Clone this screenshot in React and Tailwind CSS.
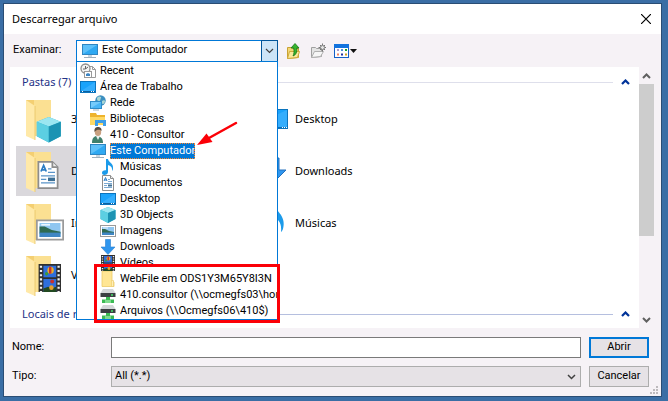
import React from "react";

const UI = "font-['Roboto','Liberation_Sans',sans-serif]";

/* ---------- icons ---------- */

function Svg({ size = 16, box = 16, className = "", children }) {
  return (
    <svg width={size} height={size} viewBox={`0 0 ${box} ${box}`} className={`shrink-0 ${className}`} aria-hidden="true">
      {children}
    </svg>
  );
}

function Monitor() {
  return (
    <>
      <rect x="0.5" y="1.5" width="15" height="10" fill="#2fa9f2" stroke="#2f86c2" />
      <path d="M1 11V2h14z" fill="#7fd0fb" opacity="0.6" />
      <path d="M6 12h4v2H6z" fill="#c9d5de" />
      <path d="M2 14h12v1H2z" fill="#9fb0bd" />
    </>
  );
}

function Recent() {
  return (
    <Svg>
      <path d="M8.5 3.5h4l3 3v8h-7z" fill="#fff" stroke="#9a9a9a" />
      <path d="M12.5 3.5v3h3" fill="none" stroke="#9a9a9a" />
      <circle cx="5.500" cy="5.500" r="4.500" fill="#f4f4f4" stroke="#8f8f8f" strokeWidth="1.300" />
      <path d="M5.500 3v3l2.500-2M3 6h2" fill="none" stroke="#666" />
      <rect x="4.500" y="8.500" width="7" height="6" fill="#fff" stroke="#9a9a9a" />
      <path d="M6 11l2-1 2 1v2H6z" fill="#3f86c4" />
    </Svg>
  );
}

function Desktop() {
  return (
    <Svg>
      <rect x="0.5" y="2.5" width="15" height="11" fill="#1aa3fb" stroke="#0b74bd" />
      <path d="M1 12L15 3v9z" fill="#4fbaff" opacity="0.5" />
      <path d="M1 12.500h14" stroke="#0a5f9e" />
      <path d="M2 12.500h1M11 12.500h1M13 12.500h1" stroke="#fff" />
    </Svg>
  );
}

function Network() {
  return (
    <Svg>
      <circle cx="10.500" cy="5.500" r="5.200" fill="#3c8fc0" />
      <path d="M7 3c2-3 5-1 4 0s0 3-2 3-2-1-2-3zM12 6c1-1 3-1 3 0s-1 3-2 3-2-2-1-3z" fill="#a9d6d4" />
      <rect x="0.500" y="6.500" width="11" height="7" fill="#4ab6f6" stroke="#2f8cc8" />
      <path d="M1 13V7h10z" fill="#93d8ff" opacity="0.600" />
      <path d="M3 15h6" stroke="#9fb0bd" />
    </Svg>
  );
}

function Libraries() {
  return (
    <Svg>
      <path d="M0 2h6l1 2h8v10H0z" fill="#eeb32c" />
      <path d="M0 6h15v8H0z" fill="#ffd964" />
      <path d="M5 14V9h11v6h-3v-3H8v3H5z" fill="#3f9fe8" />
    </Svg>
  );
}

function Person() {
  return (
    <Svg>
      <path d="M2 16c0-5 2-7 5-7s6 2 6 7z" fill="#3f7f6c" />
      <path d="M6 9h4l-2 4z" fill="#e8efec" />
      <ellipse cx="8" cy="5" rx="3.200" ry="4" fill="#c8a080" />
      <path d="M4.500 5C4 1 6 0 8 0s4 1 3.500 4C10 2.500 7 2 4.500 5z" fill="#5a4c3c" />
    </Svg>
  );
}

function Computer() {
  return <Svg><Monitor /></Svg>;
}

const NOTE = "M6 0h2c0 3 6 4 5 10-0.200 1-0.600 1.500-1 2 0.500-3.500-1-5-4-6v7c0 2-2 3-3.500 3S2 15 2 13.700 3.500 11 6 11.300z";

function Music() {
  return <Svg><path d={NOTE} fill="#1c9bea" /></Svg>;
}

function PageArt() {
  return (
    <>
      <path d="M2.500 0.500h8l3 3v12h-11z" fill="#fff" stroke="#8d8d8d" />
      <path d="M10.500 0.500v3h3" fill="#eee" stroke="#8d8d8d" />
      <path d="M4 6l1.500-3.500L7 6M4.600 5h2" fill="none" stroke="#2b7cc4" />
      <path d="M8 4.500h2M8 6.500h4M4 8.500h8M4 10.500h3M4 12.500h8" stroke="#5a94c8" strokeWidth="0.800" />
      <path d="M8 9.500h4v2H8z" fill="#3d6f94" />
    </>
  );
}

function Documents() {
  return <Svg><PageArt /></Svg>;
}

function CubeArt() {
  return (
    <>
      <path d="M8 0l7.500 3v9L8 16 0.500 12V3z" fill="#35b4ce" />
      <path d="M8 0l7.500 3L8 6 0.500 3z" fill="#9be6f1" />
      <path d="M0.500 3L8 6v10L0.500 12z" fill="#5ccfe2" />
      <path d="M8 6l7.500-3v9L8 16z" fill="#1c93b3" />
    </>
  );
}

function Cube() {
  return <Svg><CubeArt /></Svg>;
}

function PictureArt() {
  return (
    <>
      <rect x="0.500" y="2.500" width="15" height="11" fill="#fff" stroke="#9a9a9a" />
      <path d="M2 4h12v8H2z" fill="#8fc6f0" />
      <path d="M2 6l3 0 4 2 5 1v1H2z" fill="#2f6a52" />
      <path d="M2 9.500h12V12H2z" fill="#3f86c4" />
      <path d="M3 5h5" stroke="#e8f5ff" />
    </>
  );
}

function Pictures() {
  return <Svg><PictureArt /></Svg>;
}

function ArrowArt() {
  return <path d="M5.500 0.500h5V8H15l-7 7.500L1 8h4.500z" fill="#2f96ee" stroke="#2a7fd0" strokeWidth="0.600" />;
}

function Downloads() {
  return <Svg><ArrowArt /></Svg>;
}

function FilmArt() {
  return (
    <>
      <path d="M1 0h14v16H1z" fill="#2f2f2f" />
      <path d="M4 1h8v6.500H4zM4 8.500h8V16H4z" fill="#2f6fdc" />
      <path d="M2.500 1v15M13.500 1v15" stroke="#f2f2f2" strokeWidth="1.400" strokeDasharray="1.200 1.200" />
      <circle cx="8.500" cy="3.500" r="2" fill="#e8b02a" />
      <path d="M7.500 1.500h1.500v4H7.500z" fill="#c9302c" />
      <circle cx="6" cy="5.500" r="1" fill="#3a9a3c" />
      <circle cx="9.500" cy="10" r="1.200" fill="#c9302c" />
      <path d="M4 14l3-1 2 1 3-1v3H4z" fill="#234a22" />
      <circle cx="9" cy="13.500" r="1.400" fill="#e8a02a" />
    </>
  );
}

function Film() {
  return <Svg><FilmArt /></Svg>;
}

function Folder() {
  return (
    <Svg>
      <path d="M2 0h10v10l2 1v4.500H2z" fill="#ffe694" stroke="#ecca68" strokeWidth="0.800" />
      <path d="M11.500 9.500h2v6h-2z" fill="#ffefb8" stroke="#ecca68" strokeWidth="0.600" />
    </Svg>
  );
}

function NetDrive() {
  return (
    <Svg>
      <path d="M3 2h10l2.500 4H0.500z" fill="#d3d6d8" />
      <path d="M0.500 6h15v4h-15z" fill="#3b3f42" />
      <path d="M11 8h2" stroke="#46e06a" strokeWidth="1.500" />
      <path d="M6 10h4v2.500h4V16H2v-3.500h4z" fill="#3cba54" />
      <path d="M5 13h6v3H5z" fill="#7fdc8e" />
    </Svg>
  );
}

function FolderBack() {
  return (
    <>
      <path d="M4 5h25v36H4z" fill="#f4cf72" />
      <path d="M12 5h17v36H12z" fill="#fbe092" />
      <path d="M4 5l9 6v34l-9-4z" fill="#ffe9a8" />
      <path d="M13 11v34" stroke="#e9c465" strokeWidth="0.800" />
    </>
  );
}

function BigFolder({ children, place }) {
  return (
    <Svg size={48} box={48}>
      <FolderBack />
      <g transform={place}>{children}</g>
    </Svg>
  );
}

function BigDesktop() {
  return (
    <Svg size={48} box={48}>
      <rect x="1.500" y="14.500" width="40" height="19" fill="#1aa3fb" stroke="#0b74bd" />
      <path d="M2 33L41 15v18z" fill="#4fbaff" opacity="0.500" />
      <path d="M2 32.500h39" stroke="#0a6fb8" />
      <path d="M36 32.500h5" stroke="#fff" strokeDasharray="1 1" />
    </Svg>
  );
}

function BigDownloads() {
  return (
    <Svg size={48} box={48}>
      <path d="M24 11h9v12h7L28 35 17 23h7z" fill="#2f96ee" stroke="#2470bd" />
    </Svg>
  );
}

function BigMusic() {
  return (
    <Svg size={48} box={48}>
      <path d="M24 4h3c1 7 14 12 10 26-1 2-1 2-2 3 1-8-2-13-8-15v19c0 8-15 9-15 2 0-5 7-7 12-5z" fill="#1c9bea" />
    </Svg>
  );
}

function Chevron({ up = false, color = "#404040", thick = 1.5, className = "" }) {
  return (
    <svg width="9" height="6" viewBox="0 0 9 6" className={`shrink-0 ${className}`} aria-hidden="true">
      <path d={up ? "M1 5l3.500-3.500L8 5" : "M1 1l3.500 3.500L8 1"} fill="none" stroke={color} strokeWidth={thick} />
    </svg>
  );
}

function UpFolderIcon() {
  return (
    <Svg>
      <path d="M1.500 4.500h4l1 1h6v9l-11 1z" fill="#f3d774" stroke="#c9a234" />
      <path d="M3.500 8.500h10l-2 6-10 1z" fill="#fbe99a" stroke="#d0aa3c" />
      <path d="M9 0.500l4 4.500h-2.200c0.400 4-0.800 7-3.800 8 1.200-2 1.200-5 0.700-8H5z" fill="#37b52e" stroke="#17751a" strokeWidth="0.800" />
    </Svg>
  );
}

function NewFolderIcon() {
  return (
    <Svg>
      <path d="M1.500 4.500h4l1 1h5v8l-10 1z" fill="#e4e4e4" stroke="#a0a0a0" />
      <path d="M4.500 8.500h9l-3 5-9 1z" fill="#f6f6f6" stroke="#b0b0b0" />
      <circle cx="12.500" cy="4.500" r="2" fill="#e4e4e4" stroke="#777" />
      <path d="M12.500 0.500v1.500M12.500 7v1.500M8.500 4.500H10M15 4.500h1M10 2l1 1M15 2l-1 1M10 7l1-1M15 7l-1-1" stroke="#777" />
    </Svg>
  );
}

function ViewIcon() {
  return (
    <Svg>
      <rect x="0.500" y="1.500" width="14" height="13" fill="#fff" stroke="#1560c8" />
      <path d="M0 1h15v4H0z" fill="#1273de" />
      <path d="M3 6h2v2H3z" fill="#a79ad0" />
      <path d="M7 6h2v2H7z" fill="#4d8fe0" />
      <path d="M11 6h2v2h-2z" fill="#18a02c" />
      <path d="M3 10.500h2v2H3z" fill="#f08060" />
      <path d="M7 10.500h2v2H7z" fill="#2030a0" />
      <path d="M11 10.500h2v2h-2z" fill="#d0a020" />
    </Svg>
  );
}

/* ---------- data ---------- */

const LOCATIONS = [
  { name: "Recent", icon: Recent, pad: "pl-[3px]" },
  { name: "Área de Trabalho", icon: Desktop, pad: "pl-[3px]" },
  { name: "Rede", icon: Network, pad: "pl-[13px]" },
  { name: "Bibliotecas", icon: Libraries, pad: "pl-[13px]" },
  { name: "410 - Consultor", icon: Person, pad: "pl-[13px]" },
  { name: "Este Computador", icon: Computer, pad: "pl-[13px]", current: true },
  { name: "Músicas", icon: Music, pad: "pl-[23px]" },
  { name: "Documentos", icon: Documents, pad: "pl-[23px]" },
  { name: "Desktop", icon: Desktop, pad: "pl-[23px]" },
  { name: "3D Objects", icon: Cube, pad: "pl-[23px]" },
  { name: "Imagens", icon: Pictures, pad: "pl-[23px]" },
  { name: "Downloads", icon: Downloads, pad: "pl-[23px]" },
  { name: "Vídeos", icon: Film, pad: "pl-[23px]" },
  { name: "WebFile em ODS1Y3M65Y8I3N", icon: Folder, pad: "pl-[23px]" },
  { name: "410.consultor (\\\\ocmegfs03\\hom", icon: NetDrive, pad: "pl-[23px]" },
  { name: "Arquivos (\\\\Ocmegfs06\\410$)", icon: NetDrive, pad: "pl-[23px]" },
];

const FOLDERS = [
  { name: "3D Objects", icon: <BigFolder place="translate(14 22) scale(1.600)"><CubeArt /></BigFolder> },
  { name: "Desktop", icon: <BigDesktop /> },
  { name: "Documentos", icon: <BigFolder place="translate(12 14) scale(1.750)"><PageArt /></BigFolder>, selected: true },
  { name: "Downloads", icon: <BigDownloads /> },
  { name: "Imagens", icon: <BigFolder place="translate(14 17) scale(1.750)"><PictureArt /></BigFolder> },
  { name: "Músicas", icon: <BigMusic /> },
  { name: "Vídeos", icon: <BigFolder place="translate(15 13) scale(1.600 1.750)"><FilmArt /></BigFolder> },
];

/* ---------- parts ---------- */

function LocationList() {
  return (
    <ul role="listbox" aria-label="Locais" className="absolute -left-px -right-px top-full z-10 border border-[#0078d7] bg-white pt-px">
      {LOCATIONS.map(({ name, icon: Icon, pad, current }) => (
        <li key={name} role="option" aria-selected={!!current} className={`flex h-4 items-center gap-1 overflow-hidden whitespace-nowrap ${pad}`}>
          <Icon />
          <span className={current ? "bg-[#0078d7] leading-4 text-white outline-1 -outline-offset-1 outline-dotted outline-[#ff8728]" : "leading-4"}>
            {name}
          </span>
        </li>
      ))}
      <li role="presentation" aria-hidden="true" className="pointer-events-none absolute -bottom-1 left-[17px] -right-[3px] h-[59px] border-3 border-[#fb0007]" />
    </ul>
  );
}

function LocationBox() {
  return (
    <div className="relative flex h-[22px] w-[202px] items-center border border-[#0078d7] bg-white">
      <span className="pl-[5px]"><Computer /></span>
      <select id="look-in" defaultValue="pc" className="h-full min-w-0 flex-1 appearance-none bg-transparent pl-1 outline-none">
        <option value="pc">Este Computador</option>
      </select>
      <button type="button" aria-label="Abrir lista de locais" className="-my-px -mr-px flex h-[22px] w-[17px] items-center justify-center border border-[#005499] bg-[#cce4f7]">
        <Chevron thick={1.2} />
      </button>
      <LocationList />
      <svg width="42" height="26" viewBox="0 0 42 26" className="pointer-events-none absolute left-[120px] top-[79px] z-20" aria-hidden="true">
        <path d="M39 3L12 18" stroke="#fb0007" strokeWidth="2.500" strokeLinecap="round" />
        <path d="M0 25l9.500-11.500L12 17l3.500 5z" fill="#fb0007" />
      </svg>
    </div>
  );
}

function GroupHeader({ children, line }) {
  return (
    <div className="flex h-[22px] items-center pl-3 pr-[9px] font-['Noto_Sans','Open_Sans',sans-serif] text-[#1e3287]">
      <h2 className="shrink-0">{children}</h2>
      <span className={`ml-2 h-px flex-1 ${line}`} />
      <button type="button" aria-label="Recolher grupo" className="ml-2"><Chevron up color="#003399" thick={2.2} /></button>
    </div>
  );
}

function FolderView() {
  return (
    <div className="flex">
      <section className="min-w-0 flex-1 bg-white pb-[3px] pt-1">
        <GroupHeader line="bg-[#dedfeb]">Pastas (7)</GroupHeader>
        <div className="grid grid-cols-[224px_224px] pl-[6px] font-['Noto_Sans','Open_Sans',sans-serif]">
          {FOLDERS.map((f) => (
            <button key={f.name} type="button" className="h-[52px] py-px text-left">
              <span className={`flex h-[50px] items-center gap-px pl-[6px] ${f.selected ? "bg-[#dad8dc]" : ""}`}>
                {f.icon}
                <span>{f.name}</span>
              </span>
            </button>
          ))}
        </div>
        <div className="pt-[2px]">
          <GroupHeader line="bg-[#b5bfdf]">Locais de rede (3)</GroupHeader>
        </div>
      </section>
      <div className="flex w-[15px] flex-col items-center">
        <button type="button" aria-label="Rolar para cima" className="flex h-[17px] w-full items-center justify-center"><Chevron up color="#606060" thick={2} /></button>
        <div className="h-[152px] w-full bg-[#cdcdcd]" />
        <button type="button" aria-label="Rolar para baixo" className="mt-auto flex h-[17px] w-full items-center justify-center"><Chevron color="#606060" thick={2} /></button>
      </div>
    </div>
  );
}

function Grip() {
  return (
    <svg width="8" height="8" viewBox="0 0 8 8" className="absolute bottom-[2px] right-[3px]" aria-hidden="true">
      <path d="M6 0h2v2H6zM3 3h2v2H3zM6 3h2v2H6zM0 6h2v2H0zM3 6h2v2H3zM6 6h2v2H6z" fill="#bdbabd" />
    </svg>
  );
}

export default function App() {
  return (
    <div className={`min-h-screen bg-[#3a6ea5] pb-1 pl-[3px] pr-[6px] pt-[3px] text-[11px] text-black ${UI}`}>
      <main className="relative border border-[#2a4d74] bg-[#f6f2f6]">
        <header className="flex h-[30px] items-center justify-between bg-white pl-2 pr-[10px]">
          <h1 className="font-['Noto_Sans','Open_Sans',sans-serif]">Descarregar arquivo</h1>
          <button type="button" aria-label="Fechar">
            <svg width="10" height="10" viewBox="0 0 10 10" aria-hidden="true">
              <path d="M0 0l10 10M10 0L0 10" stroke="#000" strokeWidth="1.200" />
            </svg>
          </button>
        </header>

        <div className="flex h-[33px] items-center pl-[9px]">
          <label htmlFor="look-in" className="w-[63px]">Examinar:</label>
          <LocationBox />
          <div className="ml-2 flex items-center gap-2">
            <button type="button" aria-label="Um nível acima"><UpFolderIcon /></button>
            <button type="button" aria-label="Criar nova pasta"><NewFolderIcon /></button>
            <button type="button" aria-label="Menu Exibir" className="flex items-center">
              <ViewIcon />
              <svg width="7" height="4" viewBox="0 0 7 4" aria-hidden="true"><path d="M0 0h7L3.500 4z" fill="#111" /></svg>
            </button>
          </div>
        </div>

        <div className="pl-[6px] pr-[7px]">
          <FolderView />
        </div>

        <form className="grid grid-cols-[99px_1fr_68px] items-center gap-y-2 pb-[9px] pl-2 pr-3 pt-[9px]" onSubmit={(e) => e.preventDefault()}>
          <label htmlFor="file-name">Nome:</label>
          <input id="file-name" type="text" className="h-[21px] min-w-0 border border-[#7a7a7a] bg-white px-1 outline-none" />
          <button type="submit" className="ml-2 h-[21px] border-2 border-[#0078d7] bg-[#e6e2e6]">Abrir</button>

          <label htmlFor="file-type">Tipo:</label>
          <div className="flex h-[21px] items-center border border-[#adadad] bg-[#e6e2e6]">
            <select id="file-type" defaultValue="all" className="h-full min-w-0 flex-1 appearance-none bg-transparent pl-[3px] outline-none">
              <option value="all">All (*.*)</option>
            </select>
            <Chevron className="mr-1" />
          </div>
          <button type="button" className="ml-2 h-[21px] border border-[#adadad] bg-[#e6e2e6]">Cancelar</button>
        </form>
        <Grip />
      </main>
    </div>
  );
}
